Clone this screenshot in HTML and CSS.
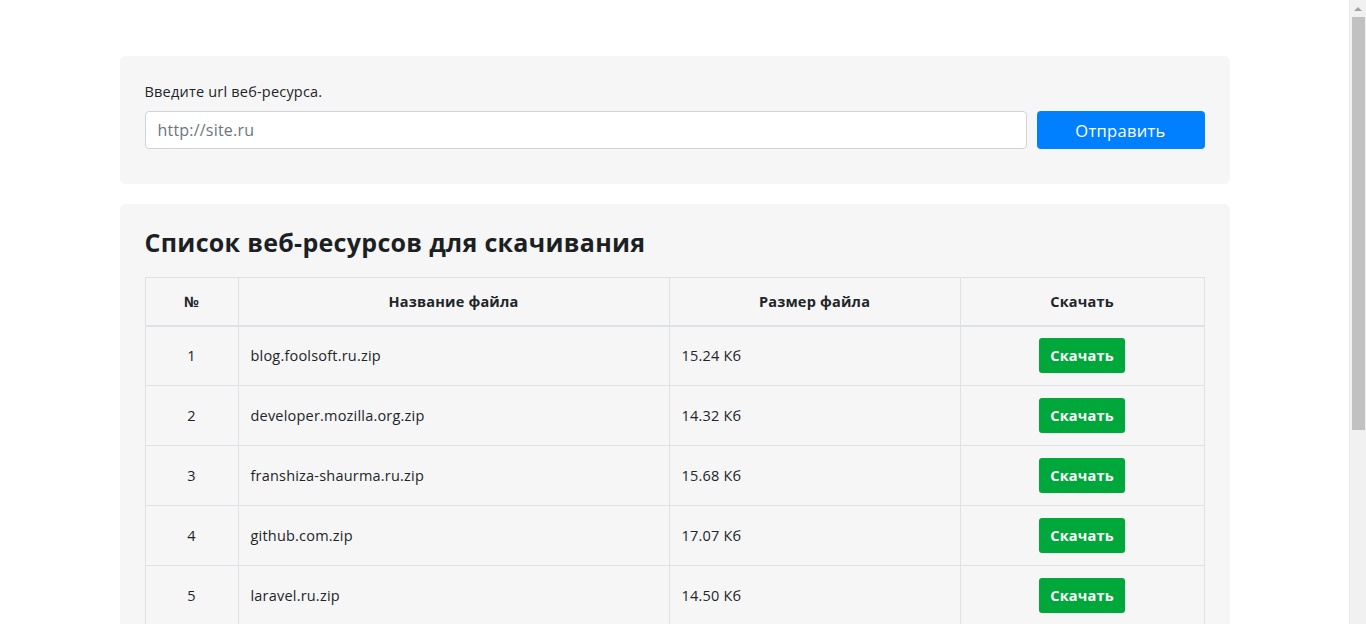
FILE: index.html
```html
<!DOCTYPE html>
<html lang="ru">
<head>
<meta charset="utf-8">
<title>Скачивание веб-ресурсов</title>
<link rel="stylesheet" href="styles.css">
</head>
<body>
<div class="container">
  <form class="card form-card">
    <label class="label" for="url">Введите url веб-ресурса.</label>
    <div class="form-row">
      <input class="input" id="url" type="text" placeholder="http://site.ru">
      <button class="btn-send" type="button">Отправить</button>
    </div>
  </form>
  <div class="card list-card">
    <h2 class="title">Список веб-ресурсов для скачивания</h2>
    <table class="table">
      <thead>
        <tr>
          <th class="c-num">№</th>
          <th class="c-name">Название файла</th>
          <th class="c-size">Размер файла</th>
          <th class="c-dl">Скачать</th>
        </tr>
      </thead>
      <tbody>
        <tr><td class="num">1</td><td>blog.foolsoft.ru.zip</td><td>15.24 Кб</td><td class="dl"><a class="btn-dl">Скачать</a></td></tr>
        <tr><td class="num">2</td><td>developer.mozilla.org.zip</td><td>14.32 Кб</td><td class="dl"><a class="btn-dl">Скачать</a></td></tr>
        <tr><td class="num">3</td><td>franshiza-shaurma.ru.zip</td><td>15.68 Кб</td><td class="dl"><a class="btn-dl">Скачать</a></td></tr>
        <tr><td class="num">4</td><td>github.com.zip</td><td>17.07 Кб</td><td class="dl"><a class="btn-dl">Скачать</a></td></tr>
        <tr><td class="num">5</td><td>laravel.ru.zip</td><td>14.50 Кб</td><td class="dl"><a class="btn-dl">Скачать</a></td></tr>
        <tr><td class="num">6</td><td>php.net.zip</td><td>16.12 Кб</td><td class="dl"><a class="btn-dl">Скачать</a></td></tr>
        <tr><td class="num">7</td><td>stackoverflow.com.zip</td><td>18.41 Кб</td><td class="dl"><a class="btn-dl">Скачать</a></td></tr>
        <tr><td class="num">8</td><td>yandex.ru.zip</td><td>13.96 Кб</td><td class="dl"><a class="btn-dl">Скачать</a></td></tr>
      </tbody>
    </table>
  </div>
</div>
<div class="scrollbar" aria-hidden="true">
  <div class="sb-arrow"></div>
  <div class="sb-thumb"></div>
</div>
</body>
</html>
```

FILE: styles.css
```css
* { box-sizing: border-box; }
html, body { margin: 0; padding: 0; }
body {
  font-family: "Open Sans", "Liberation Sans", sans-serif;
  font-size: 14.5px;
  letter-spacing: 0.2px;
  color: #212529;
  background: #fff;
  padding-right: 17px;
}
.container {
  max-width: 1140px;
  margin: 0 auto;
  padding: 56px 15px 40px;
}
.card {
  background: #f6f6f6;
  border-radius: 6px;
  padding: 25px;
}
.form-card {
  padding: 26px 25px 35px;
  margin-bottom: 20px;
}
.label {
  display: block;
  font-size: 14.5px;
  line-height: 20px;
  margin: 0 0 9px 0;
}
.form-row {
  display: flex;
  gap: 10px;
}
.input {
  flex: 1;
  height: 38px;
  border: 1px solid #ced4da;
  border-radius: 4px;
  background: #fff;
  padding: 0 12px;
  font-family: inherit;
  font-size: 16px;
  letter-spacing: 0.2px;
  color: #495057;
}
.input::placeholder { color: #6c757d; }
.btn-send {
  width: 168px;
  height: 38px;
  border: 0;
  border-radius: 4px;
  background: #0080ff;
  color: #fff;
  font-family: inherit;
  font-size: 16.5px;
  letter-spacing: 0.3px;
}
.list-card { padding: 25px 25px 30px; }
.title {
  font-size: 25px;
  font-weight: 700;
  line-height: 26px;
  letter-spacing: 0.3px;
  margin: 0 0 22px 0;
  color: #1c1f23;
}
.table {
  width: 100%;
  border-collapse: collapse;
}
.table th, .table td {
  border: 1px solid #dee2e6;
  padding: 0 12px;
  text-align: left;
}
.table th {
  height: 48px;
  font-weight: 700;
  text-align: center;
  border-bottom: 2px solid #dee2e6;
}
.table td { height: 60px; }
.c-num { width: 93px; }
.c-name { width: 431px; }
.c-size { width: 291px; }
.table td.num, .table td.dl { text-align: center; }
.btn-dl {
  display: inline-block;
  background: #00a83c;
  color: #fff;
  font-weight: 700;
  font-size: 14.5px;
  line-height: 35px;
  padding: 0 11px;
  border-radius: 3px;
}
.scrollbar {
  position: fixed;
  top: 0;
  right: 0;
  width: 17px;
  height: 100vh;
  background: #f1f1f1;
  border-left: 1px solid #e8e8e8;
  display: flex;
  flex-direction: column;
  align-items: center;
}
.sb-arrow {
  height: 17px;
  width: 100%;
  display: flex;
  align-items: center;
  justify-content: center;
}
.sb-arrow::before {
  content: "";
  border-left: 4px solid transparent;
  border-right: 4px solid transparent;
  border-bottom: 4px solid #a3a3a3;
}
.sb-thumb {
  width: 13px;
  height: 413px;
  background: #c1c1c1;
}
```
